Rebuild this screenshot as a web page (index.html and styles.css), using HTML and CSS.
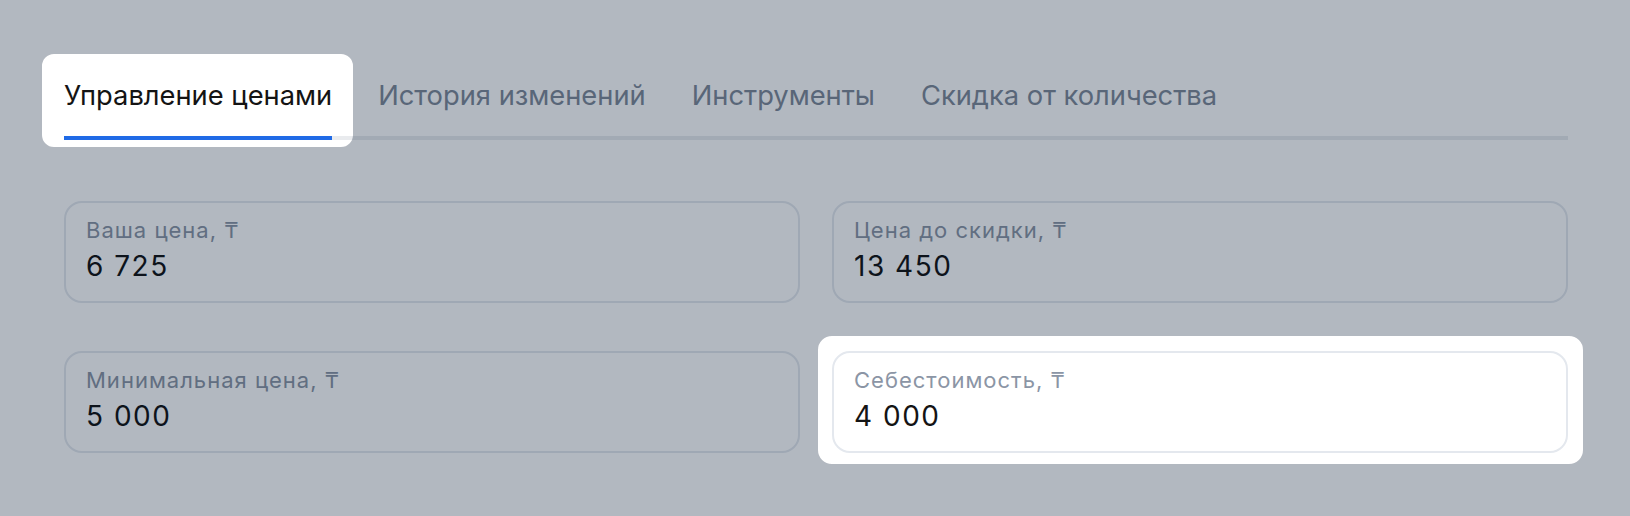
FILE: index.html
```html
<!DOCTYPE html>
<html lang="ru">
<head>
    <meta charset="UTF-8">
    <meta name="viewport" content="width=device-width, initial-scale=1.0">
    <title>Управление ценами</title>
    <link rel="stylesheet" href="styles.css">
</head>
<body>
    <main class="page">
        <nav class="tabs">
            <a class="tab tab-active" href="#">Управление ценами</a>
            <a class="tab" href="#">История изменений</a>
            <a class="tab" href="#">Инструменты</a>
            <a class="tab" href="#">Скидка от количества</a>
        </nav>

        <section class="fields">
            <div class="field">
                <span class="field-label">Ваша цена, ₸</span>
                <span class="field-value">6 725</span>
            </div>
            <div class="field">
                <span class="field-label">Цена до скидки, ₸</span>
                <span class="field-value">13 450</span>
            </div>
            <div class="field">
                <span class="field-label">Минимальная цена, ₸</span>
                <span class="field-value">5 000</span>
            </div>
            <div class="field">
                <span class="field-label">Себестоимость, ₸</span>
                <span class="field-value">4 000</span>
            </div>
        </section>
    </main>

    <!-- onboarding tour: dimmed layer with two spotlight holes -->
    <svg class="tour-overlay" aria-hidden="true">
        <path fill-rule="evenodd" d="M0 0H1630V516H0Z
            M54 54H341A12 12 0 0 1 353 66V135A12 12 0 0 1 341 147H54A12 12 0 0 1 42 135V66A12 12 0 0 1 54 54Z
            M832 336H1569A14 14 0 0 1 1583 350V450A14 14 0 0 1 1569 464H832A14 14 0 0 1 818 450V350A14 14 0 0 1 832 336Z"/>
    </svg>
</body>
</html>
```

FILE: styles.css
```css
body {
    font-family: Inter, "Noto Sans", "DejaVu Sans", sans-serif;
    margin: 0;
    padding: 0;
    background-color: #fff;
    color: #141414;
}

.page {
    padding: 78px 62px 0 64px;
}

.tabs {
    display: flex;
    gap: 46px;
    border-bottom: 4px solid #e9ebee;
}

.tab {
    font-size: 27.3px;
    line-height: 36px;
    padding-bottom: 22px;
    margin-bottom: -4px;
    border-bottom: 4px solid transparent;
    color: #808a99;
    text-decoration: none;
    white-space: nowrap;
}

.tab-active {
    color: #141414;
    border-bottom-color: #1f6ae6;
}

.fields {
    display: grid;
    grid-template-columns: 1fr 1fr;
    column-gap: 32px;
    row-gap: 48px;
    margin-top: 61px;
}

.field {
    display: flex;
    flex-direction: column;
    gap: 4px;
    padding: 13px 20px 17px;
    border: 2px solid #e4e8ee;
    border-radius: 18px;
    background-color: #fff;
}

.field-label {
    font-size: 22px;
    line-height: 28px;
    letter-spacing: 1px;
    color: #8b95a5;
}

.field-value {
    font-size: 28px;
    line-height: 36px;
    letter-spacing: 1.5px;
    color: #141414;
}

.tour-overlay {
    position: fixed;
    top: 0;
    left: 0;
    width: 100vw;
    height: 100vh;
    fill: rgba(0, 20, 47, 0.3);
}
```
